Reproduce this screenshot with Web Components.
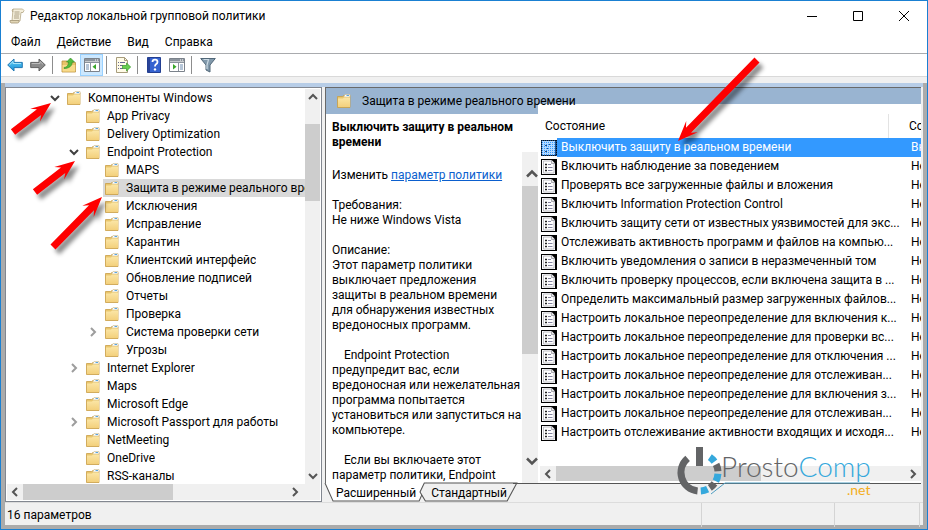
<!DOCTYPE html>
<html lang="ru">
<head>
<meta charset="utf-8">
<title>Редактор локальной групповой политики</title>
<style>
    html, body{
        margin: 0;
        height: 100%;
    }
    body{
        font: 12px/18px Roboto, "Noto Sans", sans-serif;
        color: #000;
        position: relative;
        overflow: hidden;
    }
</style>
</head>
<body>
<policy-window heading="Редактор локальной групповой политики">
    <tool-bar slot="tools"></tool-bar>
    <policy-tree slot="tree"></policy-tree>
    <policy-details slot="details" heading="Защита в режиме реального времени">
        <setting-help slot="help"></setting-help>
        <setting-list slot="list"></setting-list>
    </policy-details>
    <status-bar slot="status">16 параметров</status-bar>
</policy-window>
<red-arrow style="left: 0; top: 90px" tip="51,13" tail="13,42"></red-arrow>
<red-arrow style="left: 20px; top: 145px" tip="55,16" tail="15,47"></red-arrow>
<red-arrow style="left: 40px; top: 185px" tip="62,12" tail="13,62"></red-arrow>
<red-arrow style="left: 660px; top: 45px" tip="18,96" tail="97,15"></red-arrow>
<site-mark></site-mark>

<script>
// pictures of the toolbar and of the lists, all on a 16x16 grid
const icons = {
    scroll: `<path d="M4 1h9.500l1.500 1.500-1 2h-2L11 13H3z" fill="#f4eedb" stroke="#b6a988" stroke-width=".8"/><path d="M4 1q-1.500 1.500 0 3M1 12.500h9v1.500q-.5 1-1.500 1H2q-1-.5-1-2.500z" fill="#e2d6b6" stroke="#a39675" stroke-width=".8"/><path d="M5.500 4h5M5.500 6h5M5 8h5M5 10h5" stroke="#a4967a" stroke-width=".9"/>`,
    folder: `<path d="M1.500 3.500h5l1.500-1h6v12h-12.500z" fill="#e9c66d" stroke="#c99e46" stroke-width=".8"/><path d="M8 3.500l1-2h5v2.500H8z" fill="#fff" stroke="#c9b98b" stroke-width=".6"/><path d="M10.500 2h2.500v1h-2.500z" fill="#5aa5e2"/><path d="M2 5.500h5l1-1h6v9.500H2z" fill="url(#f)"/><defs><linearGradient id="f" x2="0" y2="1"><stop stop-color="#fbe6a6"/><stop offset="1" stop-color="#f3d07c"/></linearGradient></defs>`,
    back: `<path d="M.7 8L7 2v3.400h8.300v5.200H7V14z" fill="url(#b)" stroke="#2178b4"/><path d="M2.500 7.800L6 4.500v2h8" fill="none" stroke="#a7e5fa"/><defs><linearGradient id="b" x2="0" y2="1"><stop stop-color="#66cff5"/><stop offset="1" stop-color="#1690d8"/></linearGradient></defs>`,
    forward: `<path d="M15.300 8L9 2v3.400H.7v5.200H9V14z" fill="#8b8b8b" stroke="#616161"/><path d="M1.700 6.500H10v-2l3 2.800" fill="none" stroke="#bcbcbc"/>`,
    up: `<path d="M1 4h5l1 1.500h7.500V15H1z" fill="#e8c36a" stroke="#b9913f" stroke-width=".8"/><path d="M1.500 8h12.700v6.500H1.500z" fill="#f8da8b"/><path d="M3 10.500c3 0 4.500-2.500 4.500-5.500H5.500L9.500 1l4 4h-2.300c0 4-3 6.500-8.200 6.500z" fill="#53bb3c" stroke="#2f8d24" stroke-width=".6"/>`,
    tree: `<path d="M.5 1.500h15v13H.5z" fill="#fff" stroke="#7b828b"/><path d="M1 2h14v2.500H1z" fill="#8c949d"/><path d="M11 3h1M13 3h1" stroke="#fff"/><path d="M1 5.500h14M6.500 6v8" stroke="#8c949d"/><path d="M2 8h3M2 10h3M2 12h3" stroke="#6c8cb0"/><path d="M12 7v5.500L8.500 9.700z" fill="#38a628"/>`,
    exporting: `<path d="M1.500.5h8l3 3v12h-11z" fill="#fffbe7" stroke="#a79c7c"/><path d="M9.500.5v3h3" fill="none" stroke="#a79c7c"/><path d="M3 5.500h1M3 8.500h1M3 11.500h1M5 5.500h5M5 8.500h3M5 11.500h3" stroke="#696990"/><path d="M7.500 8.500h4V6l4.200 4-4.200 4v-2.500h-4z" fill="#68cf4e" stroke="#37982b" stroke-width=".7"/>`,
    help: `<path d="M1.500.5h13v15h-13z" fill="#3663d0" stroke="#233f91"/><path d="M2 1h2v14H2z" fill="#294399"/><path d="M6.500 5q0-2.300 2.500-2.300T11.500 5q0 1.300-1.500 2.300-1 .7-1 2.200" fill="none" stroke="#fff" stroke-width="1.800"/><circle cx="9" cy="12.400" r="1.200" fill="#fff"/>`,
    pane: `<path d="M.5 1.500h15v13H.5z" fill="#fff" stroke="#7b828b"/><path d="M1 2h14v2.500H1z" fill="#8c949d"/><path d="M11 3h1M13 3h1" stroke="#fff"/><path d="M1 5.500h14M9.500 6v8" stroke="#8c949d"/><path d="M11 8h3M11 10h3M11 12h3" stroke="#6c8cb0"/><path d="M4 7v5.500l3.500-2.800z" fill="#38a628"/>`,
    filter: `<path d="M.7 1.500h14.600L10 8v7l-4-2V8z" fill="#8199ab" stroke="#526879"/><path d="M3.500 2.500h5L7 8v4" fill="none" stroke="#cbdae4" stroke-width="1.200"/>`,
    setting: `<path d="M0 0h16v16H0z" fill="#000"/><path d="M1 1h9.500L14 4.500V15H1z" fill="#fff"/><path d="M2.500 2h8L13 4.500V14H2.500z" fill="#fff" stroke="#a5a5ad" stroke-width=".7"/><path d="M10.500 1v3.500H14" fill="#e4e4e4" stroke="#8d8d96" stroke-width=".7"/><path d="M4 5.500h2M4 8.500h2M4 11.500h2" stroke="#222" stroke-width="1.300"/><path d="M7 5.500h3M7 8.500h4.500M7 11.500h4.500" stroke="#8585a0"/>`,
    picked: `<path d="M0 0h16v16H0z" fill="#1d4f88"/><path d="M1 1h13v14H1z" fill="#b4d9ff"/><path d="M4 5.500h2M5 8.500h2M4 11.500h2M7 4.500h2" stroke="#224a80"/><path d="M1 2.500h13M1 4.500h13M1 6.500h13M1 8.500h13M1 10.500h13M1 12.500h13M1 14.500h13" stroke="#3399ff" stroke-dasharray="1 1"/><path d="M0 .5h16M.5 0v16M15.500 0v16M0 15.500h16" stroke="#05101e" stroke-dasharray="1 1"/>`
}

const chevrons = {
    up: 'M4 10l4-4 4 4',
    down: 'M4 6l4 4 4-4',
    left: 'M10 4L6 8l4 4',
    right: 'M6 4l4 4-4 4'
}

class PolicyIcon extends HTMLElement{
    constructor(){
        super()
        this.attachShadow({mode: 'open'})
    }
    connectedCallback(){
        this.shadowRoot.innerHTML = `<style>
            :host{ display: block; flex: none; width: 16px; height: 16px; }
            svg{ display: block; }
        </style>
        <svg width="100%" height="100%" viewBox="0 0 16 16" aria-hidden="true">${icons[this.getAttribute('name')]}</svg>`
    }
}

/**
 * Scroll bar: size is the length of the thumb, in pixels
 */
class ScrollTrack extends HTMLElement{
    constructor(){
        super()
        this.attachShadow({mode: 'open'})
    }
    connectedCallback(){
        const flat = this.hasAttribute('horizontal')
        this.shadowRoot.innerHTML = `<style>
            :host{
                display: flex;
                flex-direction: ${flat ? 'row' : 'column'};
                background: #f0f0f0;
            }
            button{
                flex: none;
                display: grid;
                place-items: center;
                border: 0;
                padding: 0;
                background: none;
                ${flat ? 'width' : 'height'}: var(--end, 16px);
            }
            button:first-of-type{ padding-top: var(--inset, 0); }
            button:last-of-type{ padding-bottom: var(--inset, 0); }
            svg{ width: var(--glyph, 16px); height: var(--glyph, 16px); fill: none; stroke: #555; stroke-width: 2; }
            i{
                flex: 0 1 ${this.getAttribute('size')}px;
                margin-${flat ? 'left' : 'top'}: ${this.getAttribute('offset') || 0}px;
                background: #cdcdcd;
            }
            span{ flex: 1; }
        </style>
        ${this.buildButton(flat ? 'left' : 'up')}<i></i><span></span>${this.buildButton(flat ? 'right' : 'down')}`
    }
    buildButton(way){
        return `<button aria-label="${way}"><svg viewBox="0 0 16 16"><path d="${chevrons[way]}"/></svg></button>`
    }
}

class PolicyWindow extends HTMLElement{
    constructor(){
        super()
        this.attachShadow({mode: 'open'})
    }
    connectedCallback(){
        const menu = ['Файл', 'Действие', 'Вид', 'Справка']
        this.shadowRoot.innerHTML = `<style>
            :host{
                display: flex;
                flex-direction: column;
                box-sizing: border-box;
                height: 100vh;
                border: 1px solid #1a80d2;
                background: #fff;
            }
            header{ display: flex; align-items: center; height: 29px; padding-left: 8px; }
            h1{ flex: 1; margin: 0 0 0 5px; font-size: 12px; font-weight: 400; }
            button{ border: 0; padding: 0; background: none; font: inherit; color: inherit; }
            header button{ width: 46px; height: 28px; display: grid; place-items: center; }
            header svg{ fill: none; stroke: #000; }
            nav{ display: flex; gap: 16px; height: 23px; padding-left: 10px; border-bottom: 1px solid #a9abae; }
            main{
                flex: 1;
                min-height: 0;
                display: flex;
                flex-direction: column;
                border: solid #ababab;
                border-width: 0 4px 4px;
                background: #f0f0f0;
            }
            .panes{
                flex: 1;
                min-height: 0;
                display: grid;
                grid-template-columns: 317px minmax(0, 1fr);
                grid-template-rows: minmax(0, 1fr);
                gap: 3px;
                border-top: 4px solid #b7cde7;
                padding-right: 2px;
            }
        </style>
        <header>
            <policy-icon name="scroll"></policy-icon>
            <h1>${this.getAttribute('heading')}</h1>
            <button aria-label="Свернуть"><svg width="10" height="10"><path d="M0 5.500h10"/></svg></button>
            <button aria-label="Развернуть"><svg width="10" height="10"><path d="M.5.5h9v9h-9z"/></svg></button>
            <button aria-label="Закрыть"><svg width="10" height="10"><path d="M0 0l10 10M10 0L0 10"/></svg></button>
        </header>
        <nav>${menu.map(m => `<button>${m}</button>`).join('')}</nav>
        <slot name="tools"></slot>
        <main>
            <div class="panes"><slot name="tree"></slot><slot name="details"></slot></div>
            <slot name="status"></slot>
        </main>`
    }
}

class ToolBar extends HTMLElement{
    constructor(){
        super()
        const tools = ['back', 'forward', '', 'up', 'tree', '', 'exporting', '', 'help', 'pane', '', 'filter']
        const root = this.attachShadow({mode: 'open'})
        root.innerHTML = `<style>
            :host{
                display: flex;
                align-items: center;
                height: 22px;
                padding-left: 2px;
                border-bottom: 1px solid #d9d9d9;
                box-shadow: 0 6px #f0f0f0;
                margin-bottom: 6px;
            }
            button{
                box-sizing: border-box;
                display: grid;
                place-items: center;
                width: 23px;
                height: 22px;
                border: 0;
                padding: 0;
                background: none;
            }
            .on{ background: #cce8ff; border: 1px solid #99d1ff; }
            i{ width: 1px; height: 18px; margin: 0 4px 0 3px; background: #8d8d8d; }
        </style>
        ${tools.map(t => t ? `<button aria-label="${t}" class="${t == 'tree' ? 'on' : ''}"><policy-icon name="${t}"></policy-icon></button>` : '<i></i>').join('')}`
    }
}

class PolicyTree extends HTMLElement{
    constructor(){
        super()
        // [level, name, state of the expander]
        const nodes = [
            [0, 'Компоненты Windows', 'down'],
            [1, 'App Privacy'],
            [1, 'Delivery Optimization'],
            [1, 'Endpoint Protection', 'down'],
            [2, 'MAPS'],
            [2, 'Защита в режиме реального времени', 'selected'],
            [2, 'Исключения'],
            [2, 'Исправление'],
            [2, 'Карантин'],
            [2, 'Клиентский интерфейс'],
            [2, 'Обновление подписей'],
            [2, 'Отчеты'],
            [2, 'Проверка'],
            [2, 'Система проверки сети', 'right'],
            [2, 'Угрозы'],
            [1, 'Internet Explorer', 'right'],
            [1, 'Maps'],
            [1, 'Microsoft Edge'],
            [1, 'Microsoft Passport для работы', 'right'],
            [1, 'NetMeeting'],
            [1, 'OneDrive'],
            [1, 'RSS-каналы']
        ]
        const root = this.attachShadow({mode: 'open'})
        root.innerHTML = `<style>
            :host{
                box-sizing: border-box;
                display: grid;
                grid-template-columns: minmax(0, 1fr) 15px;
                grid-template-rows: minmax(0, 1fr) 16px;
                border: 1px solid #828790;
                padding: 1px;
                background: #fff;
            }
            ul{ margin: 0; padding: 0; list-style: none; overflow: hidden; }
            li{
                display: flex;
                align-items: center;
                height: 18px;
                padding-left: calc(40px + 19px * var(--level));
                white-space: nowrap;
            }
            li svg{ flex: none; width: 16px; height: 16px; margin-right: 3px; fill: none; stroke: #9d9d9d; stroke-width: 2; }
            li svg.down{ stroke: #404040; }
            li span{ flex: 0 1 auto; padding-left: 6px; overflow: hidden; }
            .selected{ background: linear-gradient(90deg, transparent 96px, #d9d9d9 96px); }
            .tracks{ grid-column: 1 / 3; padding-right: 17px; }
        </style>
        <ul role="tree">${nodes.map(n => this.buildNode(...n)).join('')}</ul>
        <scroll-track offset="19" size="77"></scroll-track>
        <scroll-track class="tracks" horizontal size="150"></scroll-track>`
    }
    buildNode(level, name, state = ''){
        return `<li role="treeitem" class="${state == 'selected' ? state : ''}" style="--level: ${level}">
            <svg class="${state}" viewBox="0 0 16 16">${chevrons[state] ? `<path d="${chevrons[state]}"/>` : ''}</svg>
            <policy-icon name="folder"></policy-icon><span>${name}</span>
        </li>`
    }
}

class PolicyDetails extends HTMLElement{
    constructor(){
        super()
        this.attachShadow({mode: 'open'})
    }
    connectedCallback(){
        this.shadowRoot.innerHTML = `<style>
            :host{ display: flex; flex-direction: column; min-width: 0; }
            .view{
                flex: 1;
                min-height: 0;
                display: grid;
                grid-template: 26px minmax(0, 1fr) / 212px minmax(0, 1fr);
                border: solid #696969;
                border-width: 1px 0 0 1px;
                background: #fff;
            }
            h2{
                grid-area: 1 / 1 / 2 / 3;
                z-index: 1;
                display: flex;
                align-items: center;
                gap: 10px;
                margin: 0;
                padding-left: 10px;
                font-size: 12px;
                font-weight: 400;
            }
            .band{ grid-area: 1 / 1 / 2 / 3; background: #99b4d1; }
            /* the list slides under the caption */
            ::slotted([slot=list]){ margin: -10px 0 0 -9px; padding-left: 12px; }
            .tabs{ display: flex; height: 19px; isolation: isolate; }
            .tabs button{
                position: relative;
                height: 19px;
                border: 0;
                padding: 0 11px;
                background: none;
                font: inherit;
            }
            .tabs button + button{ margin-left: -7px; }
            .tabs svg{ position: absolute; inset: 0; width: 100%; height: 19px; z-index: -1; overflow: visible; }
            .rest{ flex: 1; border-top: 1px solid #555; margin-left: -5px; }
        </style>
        <div class="view">
            <div class="band"></div>
            <h2><policy-icon name="folder"></policy-icon>${this.getAttribute('heading')}</h2>
            <slot name="help"></slot>
            <slot name="list"></slot>
        </div>
        <div class="tabs" role="tablist">
            <button role="tab" aria-selected="true"><svg viewBox="0 0 102 19" preserveAspectRatio="none"><path d="M0 0l8 18h86l8-18" fill="#fff" stroke="#555"/></svg>Расширенный</button>
            <button role="tab"><svg viewBox="0 0 91 19" preserveAspectRatio="none"><path d="M0 9l5 9h76l9-18H4z" fill="#f0f0f0" stroke="#555"/></svg>Стандартный</button>
            <span class="rest"></span>
        </div>`
    }
}

class SettingHelp extends HTMLElement{
    constructor(){
        super()
        const root = this.attachShadow({mode: 'open'})
        root.innerHTML = `<style>
            :host{
                display: grid;
                grid-template: 38px minmax(0, 1fr) / minmax(0, 1fr) 16px;
                line-height: 15px;
            }
            article{ grid-area: 1 / 1 / 3 / 2; padding: 6px 0 0 6px; white-space: pre; }
            h3, p{ margin: 0 0 15px; font-size: 12px; }
            h3{ margin-bottom: 18px; }
            p:last-child{ margin: 0; }
            a{ color: #0b5fce; }
            scroll-track{ grid-area: 2 / 2; --end: 34px; --inset: 10px; --glyph: 20px; }
        </style>
        <article><h3>Выключить защиту в реальном
времени</h3><p>Изменить <a href="#setting">параметр политики</a></p><p>Требования:
Не ниже Windows Vista</p><p>Описание:
Этот параметр политики
выключает предложения
защиты в реальном времени
для обнаружения известных
вредоносных программ.</p><p>    Endpoint Protection
предупредит вас, если
вредоносная или нежелательная
программа попытается
установиться или запуститься на
компьютере.</p><p>    Если вы включаете этот
параметр политики, Endpoint</p></article>
        <scroll-track size="168"></scroll-track>`
    }
}

class SettingList extends HTMLElement{
    constructor(){
        super()
        const names = [
            'Выключить защиту в реальном времени',
            'Включить наблюдение за поведением',
            'Проверять все загруженные файлы и вложения',
            'Включить Information Protection Control',
            'Включить защиту сети от известных уязвимостей для экс...',
            'Отслеживать активность программ и файлов на компью...',
            'Включить уведомления о записи в неразмеченный том',
            'Включить проверку процессов, если включена защита в ...',
            'Определить максимальный размер загруженных файлов...',
            'Настроить локальное переопределение для включения к...',
            'Настроить локальное переопределение для проверки вс...',
            'Настроить локальное переопределение для отключения ...',
            'Настроить локальное переопределение для отслеживан...',
            'Настроить локальное переопределение для включения з...',
            'Настроить локальное переопределение для отслеживан...',
            'Настроить отслеживание активности входящих и исходя...'
        ]
        const root = this.attachShadow({mode: 'open'})
        root.innerHTML = `<style>
            :host{
                display: flex;
                flex-direction: column;
                justify-content: space-between;
                min-width: 0;
                background: linear-gradient(90deg, transparent 9px, #fff 9px);
            }
            div{ overflow: hidden; }
            table{ width: 100%; table-layout: fixed; border-collapse: collapse; }
            th{ height: 24px; padding: 10px 0 0 4px; font-weight: 400; text-align: left; white-space: nowrap; }
            th:last-child{ padding-left: 0; }
            th:last-child span{ display: block; padding-left: 20px; border-left: 1px solid #e3e3e3; line-height: 24px; }
            th:last-child{ width: 33px; }
            td{ height: 19px; padding: 0; line-height: 19px; white-space: nowrap; }
            td:last-child{ padding-left: 23px; }
            label{ display: flex; align-items: center; }
            label span{ flex: 1; padding-left: 4px; }
            .on{ color: #fff; }
            .on label span, .on td:last-child{ background: #3399ff; }
            scroll-track{ height: 15px; margin: 0 0 2px -1px; }
        </style>
        <div><table>
            <thead><tr><th>Состояние</th><th><span>Состояние</span></th></tr></thead>
            <tbody>${names.map((n, i) => this.buildRow(n, i == 0)).join('')}</tbody>
        </table></div>
        <scroll-track horizontal size="205"></scroll-track>`
    }
    buildRow(name, on){
        return `<tr class="${on ? 'on' : ''}">
            <td><label><policy-icon name="${on ? 'picked' : 'setting'}"></policy-icon><span>${name}</span></label></td>
            <td>${on ? 'Включена' : 'Не задана'}</td>
        </tr>`
    }
}

class StatusBar extends HTMLElement{
    constructor(){
        super()
        const root = this.attachShadow({mode: 'open'})
        root.innerHTML = `<style>
            :host{
                display: grid;
                grid-template-columns: minmax(0, 1fr) 132px 84px 2px;
                gap: 1px;
                height: 22px;
                line-height: 24px;
                border-top: 1px solid #dcdcdc;
            }
            span{ border-right: 1px solid #d4d4d4; padding-left: 2px; }
            i{ border-right: 1px solid #d4d4d4; }
        </style>
        <span><slot></slot></span><i></i><i></i>`
    }
}

/**
 * Arrow pointing from tail to tip, both relative to its own corner
 */
class RedArrow extends HTMLElement{
    constructor(){
        super()
        this.attachShadow({mode: 'open'})
    }
    connectedCallback(){
        const [x1, y1] = this.getAttribute('tip').split(',').map(Number)
        const [x2, y2] = this.getAttribute('tail').split(',').map(Number)
        const length = Math.hypot(x2 - x1, y2 - y1)
        const angle = Math.atan2(y2 - y1, x2 - x1) * 180 / Math.PI
        this.shadowRoot.innerHTML = `<style>
            :host{ position: absolute; pointer-events: none; }
            svg{ display: block; overflow: visible; filter: drop-shadow(4px 5px 2px rgba(0, 0, 0, .45)); }
        </style>
        <svg width="1" height="1" aria-hidden="true">
            <path transform="translate(${x1} ${y1}) rotate(${angle})" d="M0 0L20-8 15-3.500H${length}V3.500H15L20 8z" fill="#fe0000"/>
        </svg>`
    }
}

class SiteMark extends HTMLElement{
    constructor(){
        super()
        const root = this.attachShadow({mode: 'open'})
        root.innerHTML = `<style>
            :host{ position: absolute; left: 676px; top: 445px; pointer-events: none; }
            svg{ display: block; }
            text{ font-family: Lato, sans-serif; font-weight: 300; }
        </style>
        <svg width="200" height="54">
            ${this.buildArc(96, 230, '#636466')}
            ${this.buildArc(64, 86, '#35a8dc')}
            ${this.buildArc(36, 56, '#636466')}
            ${this.buildArc(4, 28, '#35a8dc')}
            ${this.buildArc(-26, -4, '#636466')}
            ${this.buildArc(-56, -36, '#35a8dc')}
            <path d="M20 2h7v19h-7z" fill="#636466"/>
            <path d="M35 49l14-11h145" fill="none" stroke="#4f9fc3"/>
            <text x="45" y="32" font-size="28" fill="#636466">Prosto<tspan fill="#35a8dc">Comp</tspan></text>
            <text x="171" y="50" font-size="14" fill="#f3ae22" style="font-weight: 400">.net</text>
        </svg>`
    }
    /**
     * Piece of the ring, angles in degrees, clockwise from the right
     */
    buildArc(from, to, color){
        const point = angle => {
            const a = angle * Math.PI / 180
            return `${23.5 + 18.5 * Math.cos(a)} ${27.5 + 18.5 * Math.sin(a)}`
        }
        return `<path d="M${point(from)}A18.500 18.500 0 0 1 ${point(to)}" fill="none" stroke="${color}" stroke-width="7"/>`
    }
}

customElements.define('policy-icon', PolicyIcon)
customElements.define('scroll-track', ScrollTrack)
customElements.define('policy-window', PolicyWindow)
customElements.define('tool-bar', ToolBar)
customElements.define('policy-tree', PolicyTree)
customElements.define('policy-details', PolicyDetails)
customElements.define('setting-help', SettingHelp)
customElements.define('setting-list', SettingList)
customElements.define('status-bar', StatusBar)
customElements.define('red-arrow', RedArrow)
customElements.define('site-mark', SiteMark)
</script>
</body>
</html>
